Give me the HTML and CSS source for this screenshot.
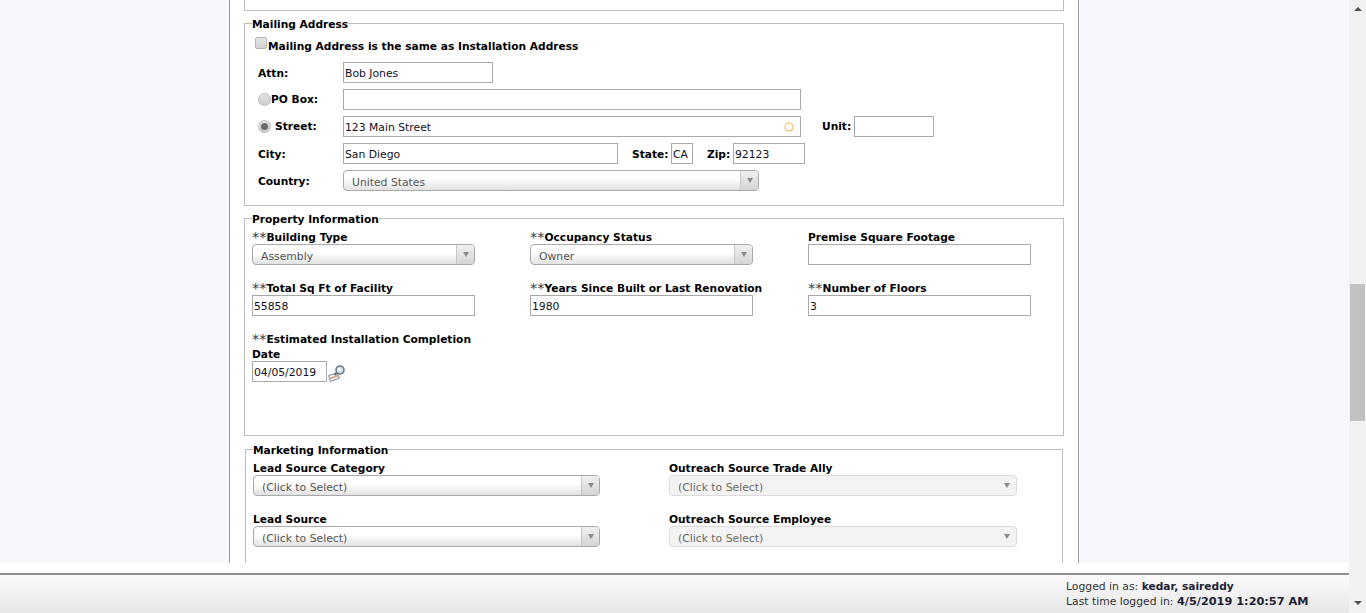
FILE: index.html
```html
<!DOCTYPE html>
<html lang="en">
<head>
<meta charset="utf-8">
<title>Mailing Address</title>
<link rel="stylesheet" href="styles.css">
</head>
<body>
<div class="page">
  <div class="viewport">
    <main class="panel">
      <div class="prev-section"></div>

      <fieldset class="group mailing">
        <legend>Mailing Address</legend>
        <label class="same-row"><span class="checkbox"></span><b>Mailing Address is the same as Installation Address</b></label>
        <div class="addr-row first">
          <b class="addr-label low">Attn:</b>
          <input class="field w-attn" value="Bob Jones">
        </div>
        <div class="addr-row">
          <span class="addr-label"><span class="radio"></span><b>PO Box:</b></span>
          <input class="field w-street">
        </div>
        <div class="addr-row">
          <span class="addr-label"><span class="radio checked"></span><b class="street-text">Street:</b></span>
          <span class="field-wrap">
            <input class="field w-street" value="123 Main Street">
            <svg class="spinner" width="10" height="10" viewBox="0 0 10 10"><circle cx="5" cy="5" r="4" fill="none" stroke="#f5b04c" stroke-width="1.1"/></svg>
          </span>
          <b class="unit-label">Unit:</b>
          <input class="field w-unit">
        </div>
        <div class="addr-row">
          <b class="addr-label low">City:</b>
          <input class="field w-city" value="San Diego">
          <b class="state-label low">State:</b>
          <input class="field w-state" value="CA">
          <b class="zip-label low">Zip:</b>
          <input class="field w-zip" value="92123">
        </div>
        <div class="addr-row">
          <b class="addr-label low">Country:</b>
          <div class="combo w-country"><span class="combo-text">United States</span><span class="combo-btn"><i class="arrow"></i></span></div>
        </div>
      </fieldset>

      <fieldset class="group property">
        <legend>Property Information</legend>
        <div class="prop-grid">
          <div class="cell">
            <label class="cap"><span class="req">**</span>Building Type</label>
            <div class="combo w-full"><span class="combo-text">Assembly</span><span class="combo-btn"><i class="arrow"></i></span></div>
          </div>
          <div class="cell">
            <label class="cap"><span class="req">**</span>Occupancy Status</label>
            <div class="combo w-full"><span class="combo-text">Owner</span><span class="combo-btn"><i class="arrow"></i></span></div>
          </div>
          <div class="cell">
            <label class="cap">Premise Square Footage</label>
            <input class="field w-full">
          </div>
          <div class="cell">
            <label class="cap"><span class="req">**</span>Total Sq Ft of Facility</label>
            <input class="field w-full" value="55858">
          </div>
          <div class="cell">
            <label class="cap"><span class="req">**</span>Years Since Built or Last Renovation</label>
            <input class="field w-full" value="1980">
          </div>
          <div class="cell">
            <label class="cap"><span class="req">**</span>Number of Floors</label>
            <input class="field w-full" value="3">
          </div>
          <div class="cell">
            <label class="cap"><span class="req">**</span>Estimated Installation Completion Date</label>
            <div class="date-row">
              <input class="field w-date" value="04/05/2019">
              <svg class="cal-icon" width="17" height="17" viewBox="0 0 17 17">
                <path d="M0.5 10.5 L9 8 L11.5 13 L2.5 16.5 Z" fill="#f2f4f6" stroke="#7a8791" stroke-width="1"/>
                <path d="M2 13.6 L10.4 10.6" stroke="#dca27a" stroke-width="1.6"/>
                <path d="M6.5 10 L9.5 7" stroke="#5d6973" stroke-width="2.2"/>
                <circle cx="12" cy="5" r="4" fill="#cfdfeb" stroke="#6d7b86" stroke-width="1.6"/>
                <circle cx="11.2" cy="4.2" r="1.5" fill="#fff"/>
              </svg>
            </div>
          </div>
        </div>
      </fieldset>

      <fieldset class="group marketing">
        <legend>Marketing Information</legend>
        <div class="mkt-grid">
          <div class="cell">
            <label class="cap">Lead Source Category</label>
            <div class="combo w-mkt"><span class="combo-text">(Click to Select)</span><span class="combo-btn"><i class="arrow"></i></span></div>
          </div>
          <div class="cell">
            <label class="cap">Outreach Source Trade Ally</label>
            <div class="combo disabled w-mkt-r"><span class="combo-text">(Click to Select)</span><span class="combo-btn"><i class="arrow"></i></span></div>
          </div>
          <div class="cell">
            <label class="cap">Lead Source</label>
            <div class="combo w-mkt"><span class="combo-text">(Click to Select)</span><span class="combo-btn"><i class="arrow"></i></span></div>
          </div>
          <div class="cell">
            <label class="cap">Outreach Source Employee</label>
            <div class="combo disabled w-mkt-r"><span class="combo-text">(Click to Select)</span><span class="combo-btn"><i class="arrow"></i></span></div>
          </div>
        </div>
      </fieldset>
    </main>
  </div>
  <div class="strip"></div>
  <footer class="status">
    <div class="status-text">
      <div>Logged in as: <b>kedar, saireddy</b></div>
      <div>Last time logged in: <b class="stamp">4/5/2019 1:20:57 AM</b></div>
    </div>
  </footer>
</div>
<aside class="scrollbar">
  <i class="sb-up"></i>
  <div class="sb-thumb"></div>
  <i class="sb-down"></i>
</aside>
</body>
</html>
```
FILE: styles.css
```css
* { box-sizing: border-box; }
html, body { margin: 0; height: 613px; overflow: hidden; }
body {
  display: flex;
  font-family: "DejaVu Sans", Verdana, sans-serif;
  font-size: 10.8px;
  line-height: 15px;
  color: #000;
  background: #fff;
}
b { font-size: 10.65px; }
.page { flex: 1; min-width: 0; display: flex; flex-direction: column; }
.viewport { height: 563px; overflow: hidden; background: #f7f8fd; padding-left: 229px; }
.panel {
  width: 850px;
  height: 563px;
  overflow: hidden;
  background: #fff;
  border-left: 1px solid #9c9ca4;
  border-right: 1px solid #9c9ca4;
  padding: 0 14px;
}
.prev-section {
  height: 11px;
  border: 1px solid #bdbdbd;
  border-top: 0;
  margin-bottom: 5px;
}
.group {
  margin: 0 0 5px;
  padding: 0 7px;
  border: 1px solid #bdbdbd;
  min-width: 0;
}
.group legend {
  padding: 3px 0 0;
  font-weight: bold;
  line-height: 12px;
  font-size: 10.65px;
}
.mailing { height: 190px; }
.property { height: 225px; margin-bottom: 6px; }
.marketing { height: 200px; margin: 0 1px; }

.same-row { display: flex; align-items: flex-start; height: 16px; padding-left: 3px; margin-top: 6px; }
.same-row b { margin: 2px 0 0 1px; }
.checkbox {
  width: 12px; height: 12px; flex: none;
  border: 1px solid #b4b4b4; border-radius: 2px;
  background: linear-gradient(#e6e6e6, #d0d0d0);
}
.addr-row { display: flex; align-items: center; height: 21px; margin-top: 6px; padding-left: 6px; }
.addr-row.first { margin-top: 9px; }
.addr-label { width: 85px; flex: none; display: flex; align-items: center; }
.low { padding-top: 2px; }
.radio {
  width: 13px; height: 13px; flex: none; border-radius: 50%;
  border: 1px solid #bcbcbc;
  background: linear-gradient(#e2e2e2, #cfcfcf);
  display: flex; align-items: center; justify-content: center;
}
.radio.checked::after { content: ""; width: 7px; height: 7px; border-radius: 50%; background: #6a6a6a; }
.street-text { margin-left: 4px; }
.unit-label { margin-left: 21px; margin-right: 3px; width: 29px; }
.state-label { margin-left: 14px; width: 39px; }
.zip-label { margin-left: 14px; width: 26px; }

.field {
  height: 21px;
  border: 1px solid #a9a9a9;
  background: #fff;
  padding: 2px 1px 0;
  margin: 0;
  font: 10.8px/15px "DejaVu Sans", Verdana, sans-serif;
  color: #101020;
  border-radius: 0;
  outline: 0;
}
.field-wrap { position: relative; display: block; height: 21px; }
.spinner { position: absolute; right: 7px; top: 6px; }
.w-attn { width: 150px; }
.w-street { width: 458px; }
.w-unit { width: 80px; }
.w-city { width: 275px; }
.w-state { width: 22px; }
.w-zip { width: 72px; }
.w-country { width: 416px; }
.w-full { width: 223px; }
.w-date { width: 75px; }
.w-mkt { width: 347px; }
.w-mkt-r { width: 348px; }

.combo {
  height: 21px;
  display: flex;
  border: 1px solid #a9a9a9;
  border-radius: 4px;
  background: linear-gradient(#fff 40%, #e2e2e2);
  overflow: hidden;
  color: #555;
}
.combo-text { flex: 1; padding: 4px 0 0 8px; line-height: 15px; }
.combo-btn {
  width: 18px; flex: none;
  border-left: 1px solid #c8c8c8;
  background: linear-gradient(#f0f0f0, #d4d4d4);
  display: flex; align-items: center; justify-content: center;
}
.arrow { width: 0; height: 0; border-left: 3.5px solid transparent; border-right: 3.5px solid transparent; border-top: 5px solid #8a8a8a; }
.combo.disabled { border-color: #dcdcdc; background: #f3f3f3; color: #6a6a6a; }
.combo.disabled .combo-btn { border-left: 0; background: none; }

.prop-grid {
  display: grid;
  grid-template-columns: repeat(3, 278px);
  row-gap: 15px;
  padding-top: 3px;
  margin-right: -60px;
}
.mkt-grid {
  display: grid;
  grid-template-columns: 416px 1fr;
  row-gap: 15px;
  padding-top: 3px;
}
.cell { display: flex; flex-direction: column; justify-content: flex-end; }
.cap { display: block; font-weight: bold; font-size: 10.65px; max-width: 240px; padding-top: 1px; margin-bottom: -1px; }
.req { font-weight: normal; font-size: 14.5px; line-height: 0; vertical-align: -1px; color: #3a3a44; }
.date-row { display: flex; align-items: flex-start; }
.cal-icon { margin: 4px 0 0 1px; }

.strip { height: 10px; background: #fff; }
.status {
  height: 40px;
  border-top: 2px solid #8e8e8e;
  background: linear-gradient(#fbfbfb, #e6e6e6);
  display: flex;
  justify-content: flex-end;
  padding: 4px 40px 0 0;
  color: #333;
}
.status-text { width: 243px; }
.status-text b { color: #223; }
.status-text .stamp { font-size: 11.3px; }

.scrollbar { width: 17px; flex: none; background: #f1f1f1; display: flex; flex-direction: column; align-items: center; height: 613px; }
.sb-up { margin-top: 7px; width: 0; height: 0; border-left: 4px solid transparent; border-right: 4px solid transparent; border-bottom: 4px solid #505050; }
.sb-thumb { width: 15px; height: 137px; margin-top: 273px; background: #c1c1c1; }
.sb-down { margin-top: auto; margin-bottom: 8px; width: 0; height: 0; border-left: 4px solid transparent; border-right: 4px solid transparent; border-top: 4px solid #505050; }
```
